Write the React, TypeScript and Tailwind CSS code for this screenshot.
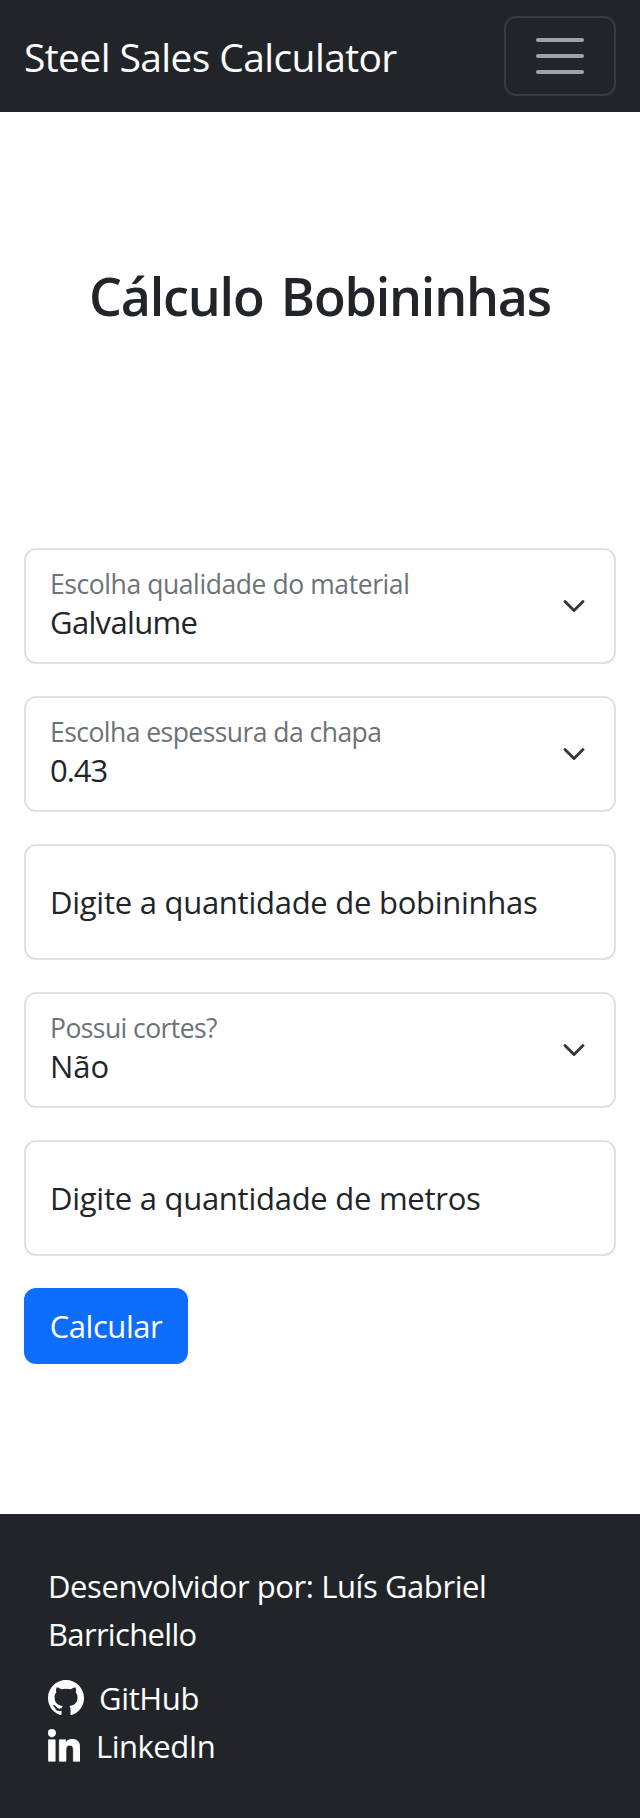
import { BsGithub } from "react-icons/bs";
import { FaLinkedinIn } from "react-icons/fa";

function SelectField({ label, labelClass, value, valueClass }: { label: string; labelClass: string; value: string; valueClass: string }) {
  return (
    <button type="button" className="flex h-[116px] w-full items-center justify-between rounded-xl border-2 border-[#dee2e6] bg-white pr-7 pl-6 text-left">
      <span className="flex h-full flex-col pt-4">
        <span className={`text-[26.5px] leading-9 text-[#6c7278] ${labelClass}`}>{label}</span>
        <span className={`leading-10 ${valueClass}`}>{value}</span>
      </span>
      <svg viewBox="0 0 16 16" className="size-6 fill-none stroke-[#343a40] stroke-2" strokeLinecap="round" strokeLinejoin="round">
        <path d="m2 5 6 6 6-6" />
      </svg>
    </button>
  );
}

function InputField({ label }: { label: string }) {
  return (
    <label className="flex h-[116px] items-center rounded-xl border-2 border-[#dee2e6] bg-white pl-6 tracking-[-0.26px]">
      {label}
    </label>
  );
}

export default function App() {
  return (
    <div className="flex min-h-screen flex-col bg-white font-['Open_Sans','Noto_Sans',sans-serif] text-[31px] text-[#212529]">
      <header className="flex h-28 items-center justify-between bg-[#212529] px-6 text-white">
        <a className="pt-0.5 text-[39px] leading-[60px] tracking-[-0.61px]">Steel Sales Calculator</a>
        <button type="button" aria-label="Menu" className="flex h-20 w-28 flex-col items-center justify-center gap-3 rounded-xl border-2 border-[#373b3e]">
          <span className="h-1 w-12 rounded-full bg-[#a0a2a3]" />
          <span className="h-1 w-12 rounded-full bg-[#a0a2a3]" />
          <span className="h-1 w-12 rounded-full bg-[#a0a2a3]" />
        </button>
      </header>

      <main className="px-6 pb-[150px]">
        <h1 className="pt-[152px] pb-[220px] text-center text-[52px] leading-16 font-semibold tracking-[-1.18px] [word-spacing:5px]">Cálculo Bobininhas</h1>
        <form className="flex flex-col items-stretch gap-8">
          <SelectField label="Escolha qualidade do material" labelClass="tracking-[-0.42px]" value="Galvalume" valueClass="tracking-[-0.66px]" />
          <SelectField label="Escolha espessura da chapa" labelClass="tracking-[-0.54px]" value="0.43" valueClass="tracking-[-1px]" />
          <InputField label="Digite a quantidade de bobininhas" />
          <SelectField label="Possui cortes?" labelClass="tracking-[-0.56px]" value="Não" valueClass="tracking-[0px]" />
          <InputField label="Digite a quantidade de metros" />
          <button type="button" className="h-[76px] w-[164px] rounded-xl bg-[#0d6efd] tracking-[-0.43px] text-white">Calcular</button>
        </form>
      </main>

      <footer className="flex flex-col bg-[#212529] p-12 leading-[48px] text-white">
        <p className="mb-4 tracking-[-0.42px]">
          Desenvolvidor por: Luís Gabriel
          <br />
          <span className="tracking-[-0.68px]">Barrichello</span>
        </p>
        <a className="flex h-12 items-center">
          <BsGithub className="size-9" />
          <span className="ml-[15px] tracking-[-0.36px]">GitHub</span>
        </a>
        <a className="flex h-12 items-center">
          <FaLinkedinIn className="mt-[3px] h-[37px] w-8 stroke-white stroke-[10px]" />
          <span className="ml-4 tracking-[-0.5px]">LinkedIn</span>
        </a>
      </footer>
    </div>
  );
}
